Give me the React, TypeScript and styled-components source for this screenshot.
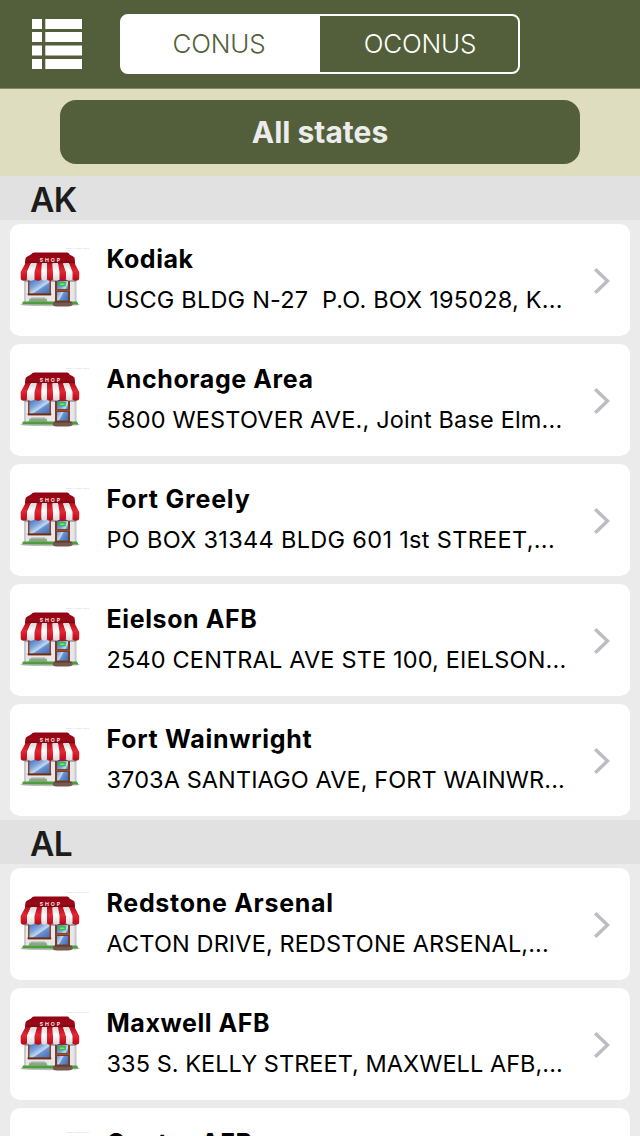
import styled, { createGlobalStyle } from "styled-components";

const GlobalStyle = createGlobalStyle`
  body {
    margin: 0;
    background: #ebebeb;
    font-family: Inter, "Liberation Sans", sans-serif;
    overflow: hidden;
  }
`;

const Screen = styled.div`
  width: 640px;
  height: 1136px;
  overflow: hidden;
  background: #ebebeb;
`;

const Header = styled.header`
  box-sizing: border-box;
  height: 89px;
  padding: 14px 0 0 32px;
  display: flex;
  align-items: flex-start;
  background: #535f3a;
  border-bottom: 1px solid #85856c;
`;

const MenuIcon = styled.svg`
  width: 50px;
  height: 50px;
  margin: 5px 38px 0 0;
  fill: #fff;
`;

const Segments = styled.div`
  box-sizing: border-box;
  display: flex;
  width: 400px;
  height: 60px;
  border: 2px solid #fff;
  border-radius: 8px;
  overflow: hidden;
  background: linear-gradient(90deg, #fff 50%, #535f3a 50%);
`;

const Segment = styled.button<{ $active?: boolean }>`
  box-sizing: border-box;
  flex: none;
  width: 198px;
  padding: ${(p) => (p.$active ? "0 4px 0 0" : "0 0 0 2px")};
  border: 0;
  background: ${(p) => (p.$active ? "#fff" : "transparent")};
  color: ${(p) => (p.$active ? "#535f3a" : "#fff")};
  font: 350 26px/56px Inter, sans-serif;
  letter-spacing: -0.2px;
`;

const FilterBar = styled.div`
  box-sizing: border-box;
  height: 87px;
  padding: 11px 60px 12px;
  background: #dfddbf;
`;

const FilterButton = styled.button`
  width: 100%;
  height: 64px;
  padding: 0;
  border: 0;
  border-radius: 16px;
  background: #535f3a;
  color: #ececec;
  font: 660 30px/64px Inter, sans-serif;
`;

const SectionTitle = styled.h2`
  box-sizing: border-box;
  height: 44px;
  margin: 0;
  padding-left: 30px;
  background: #e1e1e1;
  color: #1c1c1c;
  font-size: 33.5px;
  font-weight: 570;
  line-height: 48px;
  letter-spacing: -0.7px;
`;

const List = styled.div`
  display: flex;
  flex-direction: column;
  gap: 8px;
  padding: 4px 10px;
`;

const Card = styled.div`
  box-sizing: border-box;
  display: flex;
  align-items: center;
  height: 112px;
  padding: 0 20px 0 10px;
  border-radius: 10px;
  background: #fff;
`;

const ShopIcon = styled.svg`
  flex: none;
  width: 70px;
  height: 64px;
  margin: -4px 16.5px 0 0;
`;

const Info = styled.div`
  flex: 1;
  min-width: 0;
  padding-bottom: 2px;
  white-space: pre;
`;

const Name = styled.div<{ $spacing: number }>`
  font-size: 25px;
  font-weight: 690;
  line-height: 40px;
  letter-spacing: ${(p) => p.$spacing}px;
`;

const Address = styled.div<{ $spacing?: number }>`
  min-height: 41px;
  font-size: 23.5px;
  line-height: 41px;
  letter-spacing: ${(p) => p.$spacing ?? 0}px;
`;

const Chevron = styled.svg`
  flex: none;
  width: 18px;
  height: 28px;
  margin-top: 1px;
  fill: none;
  stroke: #bdbcc3;
  stroke-width: 3.4;
`;

// awning stripes: top-left, top-right, bottom-left, bottom-right
const stripes = [
  [5.5, 11, 0.7, 7],
  [11, 17, 7, 14.5],
  [17, 22, 14.5, 21.5],
  [22, 27, 21.5, 27],
  [27, 32.5, 27, 33],
  [32.5, 38, 33, 39.5],
  [38, 43, 39.5, 46],
  [43, 49, 46, 52.5],
  [49, 54.5, 52.5, 59.2],
];

const Defs = () => (
  <svg width="0" height="0" style={{ position: "absolute" }}>
    <defs>
      <linearGradient id="roof" x2="0" y2="1">
        <stop offset="0" stopColor="#920413" />
        <stop offset="0.65" stopColor="#9c0918" />
        <stop offset="1" stopColor="#6b0610" />
      </linearGradient>
      <linearGradient id="red" x2="0" y2="1">
        <stop offset="0" stopColor="#b80c1b" />
        <stop offset="0.45" stopColor="#e32735" />
        <stop offset="1" stopColor="#b90716" />
      </linearGradient>
      <linearGradient id="white" x2="0" y2="1">
        <stop offset="0" stopColor="#d8d6d6" />
        <stop offset="0.45" stopColor="#fff" />
        <stop offset="1" stopColor="#d6d6d8" />
      </linearGradient>
      <linearGradient id="glass" x2="1" y2="1">
        <stop offset="0" stopColor="#4675bc" />
        <stop offset="0.35" stopColor="#7fa5da" />
        <stop offset="0.55" stopColor="#c3d8f2" />
        <stop offset="0.62" stopColor="#6a92cf" />
        <stop offset="1" stopColor="#3f6db5" />
      </linearGradient>
    </defs>
  </svg>
);

const Shop = () => (
  <ShopIcon viewBox="0 0 70 64">
    <path d="M46 2.5h7m1 0h8m1 0h6" stroke="#e6e6e6" strokeWidth="0.8" />
    <ellipse cx="30" cy="58.6" rx="30" ry="1.6" fill="#bdbdbd" />
    <path d="M4 31H56.5V57H4z" fill="#e7e7ea" />
    <path d="M4 31H6V56H4zM54.5 31h2V56h-2z" fill="#c9c9ce" />
    <path d="M5 32H56v3.8H5z" fill="#55555f" opacity="0.55" />
    <path d="M8 34H31V49.5H8z" fill="#8a4428" />
    <path d="M9.5 34H29.5V47.5H9.5z" fill="url(#glass)" />
    <path d="M7.5 48.3H31.3" stroke="#6c2d18" strokeWidth="1.4" />
    <path d="M35 34H50V56.5H35z" fill="#7c3c24" />
    <path d="M37 35H48V43H37zM37 46H48V54.5H37z" fill="url(#glass)" />
    <path d="M36 44.2H50" stroke="#a65a38" />
    <path d="M38.8 36H45.8V40.2H38.8z" fill="#2fc043" />
    <path d="M40 38.2h4.5" stroke="#a5edaa" />
    <path d="M2 58.2L3 55.4H34V58.4zM50 55.4H57L58.5 58.4H50z" fill="#4b9e3a" />
    <path
      d="M9 55.4l1-3 1 2 1-3 1 3 1-3 1 3 1-3 1 3 1-3 1 3 1-3 1 3 1-3 1 3 1-3 1 3 1-2 1 3z"
      fill="#8fae87"
      stroke="#5f7d58"
      strokeWidth="0.4"
    />
    <path d="M34 55.8H51.5L53 58Q52 60.5 48 60.5H37Q33 60.5 32.5 58z" fill="#76594c" />
    <path d="M34 56H51.5" stroke="#4b3329" strokeWidth="0.8" />
    <path d="M14.5 6.6H47Q49 6.6 49.5 8.6L54 11Q55 12 55 18H5Q5 12 6.5 11L11 8.6Q12 6.6 14.5 6.6z" fill="url(#roof)" />
    {stripes.map(([a, b, c, d], i) => (
      <path
        key={a}
        d={`M${a} 17H${b}L${d} 26V32Q${d} 34.8 ${(c + d) / 2} 34.8T${c} 32V26z`}
        fill={i % 2 ? "url(#white)" : "url(#red)"}
      />
    ))}
    <text
      x="30.8"
      y="15.8"
      fill="#f7dfe0"
      fontSize="5.2"
      fontWeight="700"
      letterSpacing="1.9"
      textAnchor="middle"
    >
      SHOP
    </text>
  </ShopIcon>
);

type Store = {
  name: string;
  nameSpacing: number;
  address?: string;
  spacing?: number;
};

const sections: { state: string; stores: Store[] }[] = [
  {
    state: "AK",
    stores: [
      { name: "Kodiak", nameSpacing: 0.52, address: "USCG BLDG N-27  P.O. BOX 195028, K...", spacing: 0.2 },
      { name: "Anchorage Area", nameSpacing: 0.6, address: "5800 WESTOVER AVE., Joint Base Elm...", spacing: 0.17 },
      { name: "Fort Greely", nameSpacing: 0.8, address: "PO BOX 31344 BLDG 601 1st STREET,...", spacing: 0.32 },
      { name: "Eielson AFB", nameSpacing: 0.6, address: "2540 CENTRAL AVE STE 100, EIELSON...", spacing: 0.16 },
      { name: "Fort Wainwright", nameSpacing: 0.7, address: "3703A SANTIAGO AVE, FORT WAINWR...", spacing: 0.09 },
    ],
  },
  {
    state: "AL",
    stores: [
      { name: "Redstone Arsenal", nameSpacing: 0.7, address: "ACTON DRIVE, REDSTONE ARSENAL,...", spacing: 0.12 },
      { name: "Maxwell AFB", nameSpacing: 0.56, address: "335 S. KELLY STREET, MAXWELL AFB,...", spacing: 0.05 },
      { name: "Gunter AFB", nameSpacing: 0.65 },
    ],
  },
];

const App = () => (
  <Screen>
    <GlobalStyle />
    <Defs />
    <Header>
      <MenuIcon viewBox="0 0 50 50">
        {[0, 13, 26.5, 40].map((y) => (
          <path key={y} d={`M0 ${y}h10v10h-10zM13.3 ${y}H50v10H13.3z`} />
        ))}
      </MenuIcon>
      <Segments>
        <Segment $active>CONUS</Segment>
        <Segment>OCONUS</Segment>
      </Segments>
    </Header>
    <FilterBar>
      <FilterButton>All states</FilterButton>
    </FilterBar>
    {sections.map((section) => (
      <section key={section.state}>
        <SectionTitle>{section.state}</SectionTitle>
        <List>
          {section.stores.map((store) => (
            <Card key={store.name}>
              <Shop />
              <Info>
                <Name $spacing={store.nameSpacing}>{store.name}</Name>
                <Address $spacing={store.spacing}>{store.address}</Address>
              </Info>
              <Chevron viewBox="0 0 18 28">
                <path d="M3.2 2.2L15.5 14L3.2 25.8" />
              </Chevron>
            </Card>
          ))}
        </List>
      </section>
    ))}
  </Screen>
);

export default App;
